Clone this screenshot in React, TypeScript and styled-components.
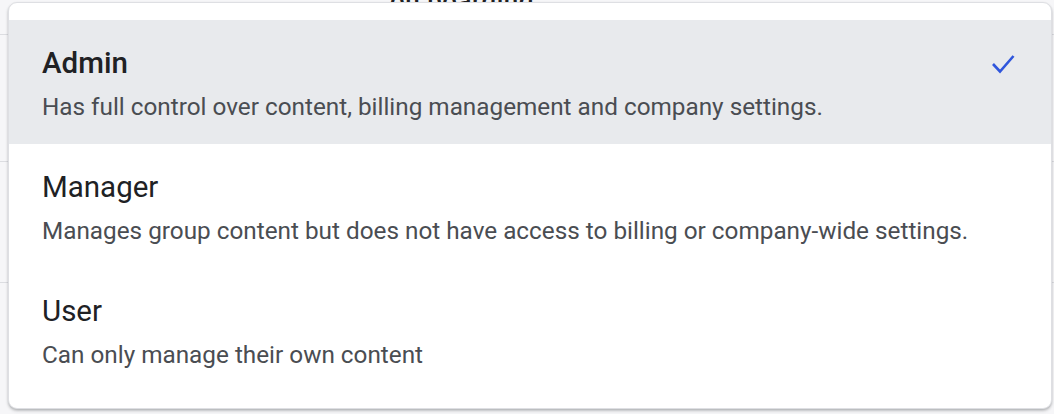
import styled, { createGlobalStyle } from "styled-components";

const GlobalStyle = createGlobalStyle`
  html, body {
    margin: 0;
    padding: 0;
    background: #ffffff;
    font-family: Roboto, "Noto Sans", Arial, sans-serif;
  }
`;

const Page = styled.div`
  position: relative;
  width: 1054px;
  height: 414px;
  overflow: hidden;
  background: #f6f6f8;
`;

const Backdrop = styled.div`
  display: flex;
  flex-direction: column;
`;

const BackRow = styled.div<{ $h: number }>`
  height: ${(p) => p.$h}px;
  border-bottom: 1px solid #dcdde1;
  display: flex;
  align-items: flex-end;
  padding-left: 390px;
`;

const BackText = styled.span`
  font-size: 26px;
  font-weight: 500;
  color: #202124;
  letter-spacing: 0.5px;
  margin-bottom: 18px;
`;

const Menu = styled.div`
  position: absolute;
  top: 2px;
  left: 8px;
  right: 2px;
  bottom: 5px;
  background: #ffffff;
  border: 1px solid #dedfe3;
  border-radius: 9px;
  box-shadow: 0 2px 3px rgba(60, 64, 67, 0.25), 0 1px 2px rgba(60, 64, 67, 0.15);
  padding: 17px 0 16px;
  box-sizing: border-box;
  display: flex;
  flex-direction: column;
`;

const Option = styled.div<{ $selected?: boolean }>`
  height: 124px;
  box-sizing: border-box;
  padding: 25px 36px 0 33px;
  display: flex;
  align-items: flex-start;
  justify-content: space-between;
  background: ${(p) => (p.$selected ? "#e8eaed" : "transparent")};
`;

const Text = styled.div`
  display: flex;
  flex-direction: column;
  gap: 11px;
`;

const Title = styled.div<{ $selected?: boolean }>`
  font-size: 29.5px;
  line-height: 36px;
  font-weight: ${(p) => (p.$selected ? 500 : 400)};
  color: #202124;
`;

const Desc = styled.div`
  font-size: 24.3px;
  line-height: 30px;
  color: #4a4d52;
`;

const Check = styled.svg`
  width: 24px;
  height: 20px;
  margin-top: 9px;
  flex-shrink: 0;
`;

const roles = [
  {
    name: "Admin",
    desc: "Has full control over content, billing management and company settings.",
    selected: true,
  },
  {
    name: "Manager",
    desc: "Manages group content but does not have access to billing or company-wide settings.",
  },
  { name: "User", desc: "Can only manage their own content" },
];

export default function App() {
  return (
    <>
      <GlobalStyle />
      <Page>
        <Backdrop>
          <BackRow $h={34}>
            <BackText>on boarding</BackText>
          </BackRow>
          <BackRow $h={126} />
          <BackRow $h={120} />
          <BackRow $h={134} />
        </Backdrop>
        <Menu>
          {roles.map((r) => (
            <Option key={r.name} $selected={r.selected}>
              <Text>
                <Title $selected={r.selected}>{r.name}</Title>
                <Desc>{r.desc}</Desc>
              </Text>
              {r.selected && (
                <Check viewBox="0 0 24 20">
                  <polyline
                    points="2,10 9,17.5 22.5,2"
                    fill="none"
                    stroke="#2f56dc"
                    strokeWidth="2.6"
                  />
                </Check>
              )}
            </Option>
          ))}
        </Menu>
      </Page>
    </>
  );
}
